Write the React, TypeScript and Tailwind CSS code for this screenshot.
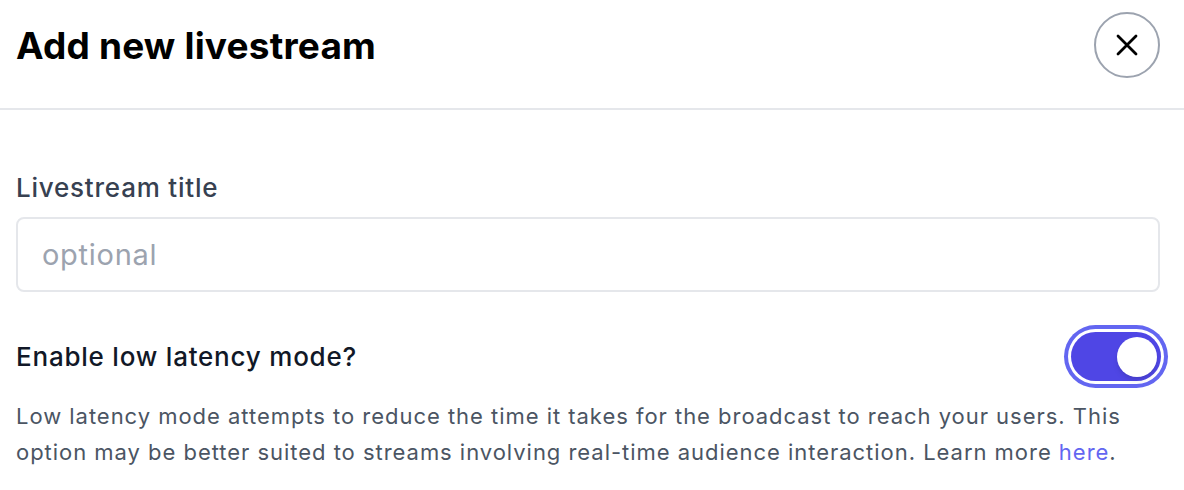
import React, { useState } from 'react';

const font = { fontFamily: 'Inter, "Noto Sans", sans-serif' };

const App: React.FC = () => {
  const [lowLatency, setLowLatency] = useState(true);

  return (
    <div className="w-[1184px] h-[490px] bg-white overflow-hidden" style={font}>
      {/* Header */}
      <div className="flex items-center justify-between pl-4 pr-6 pt-3 pb-[30px] border-b-2 border-[#e5e7eb]">
        <h1 className="text-[37px] leading-none font-bold text-black tracking-[0.005em]">
          Add new livestream
        </h1>
        <button className="w-[66px] h-[66px] rounded-full border-2 border-[#9ca3af] flex items-center justify-center">
          <svg width="22" height="22" viewBox="0 0 22 22" fill="none" stroke="black" strokeWidth="2.8" strokeLinecap="round">
            <path d="M2 2L20 20M20 2L2 20" />
          </svg>
        </button>
      </div>

      {/* Body */}
      <div className="pl-4 pr-6 pt-[60px]">
        <label className="block text-[26px] leading-9 font-medium text-[#374151] tracking-[0.03em]">
          Livestream title
        </label>
        <input
          type="text"
          placeholder="optional"
          className="mt-[11px] w-full h-[75px] rounded-[8px] border-2 border-[#e5e7eb] px-6 text-[29px] tracking-[0.025em] text-[#111827] placeholder:text-[#9ca3af] outline-none"
        />

        <div className="mt-[40px] flex items-center justify-between">
          <span className="text-[26px] leading-9 font-medium text-[#111827] tracking-[0.03em]">Enable low latency mode?</span>
          <button
            onClick={() => setLowLatency(!lowLatency)}
            className={`relative w-[90px] h-[49px] rounded-full mr-[-1px] ring-4 ring-[#6366f1] ring-offset-[3px] ring-offset-white ${lowLatency ? 'bg-[#4f46e5]' : 'bg-[#e5e7eb]'}`}
          >
            <span
              className={`absolute top-[5px] w-[40px] h-[40px] rounded-full bg-white shadow-md ${lowLatency ? 'right-[4px]' : 'left-[4px]'}`}
            />
          </button>
        </div>

        <p className="mt-[17px] text-[22px] leading-9 text-[#4b5563] tracking-[0.044em]">
          Low latency mode attempts to reduce the time it takes for the broadcast to reach your users. This option may be better suited to streams involving real-time audience interaction. Learn more{' '}
          <a href="#" className="text-[#6366f1]">here</a>.
        </p>
      </div>
    </div>
  );
};

export default App;
